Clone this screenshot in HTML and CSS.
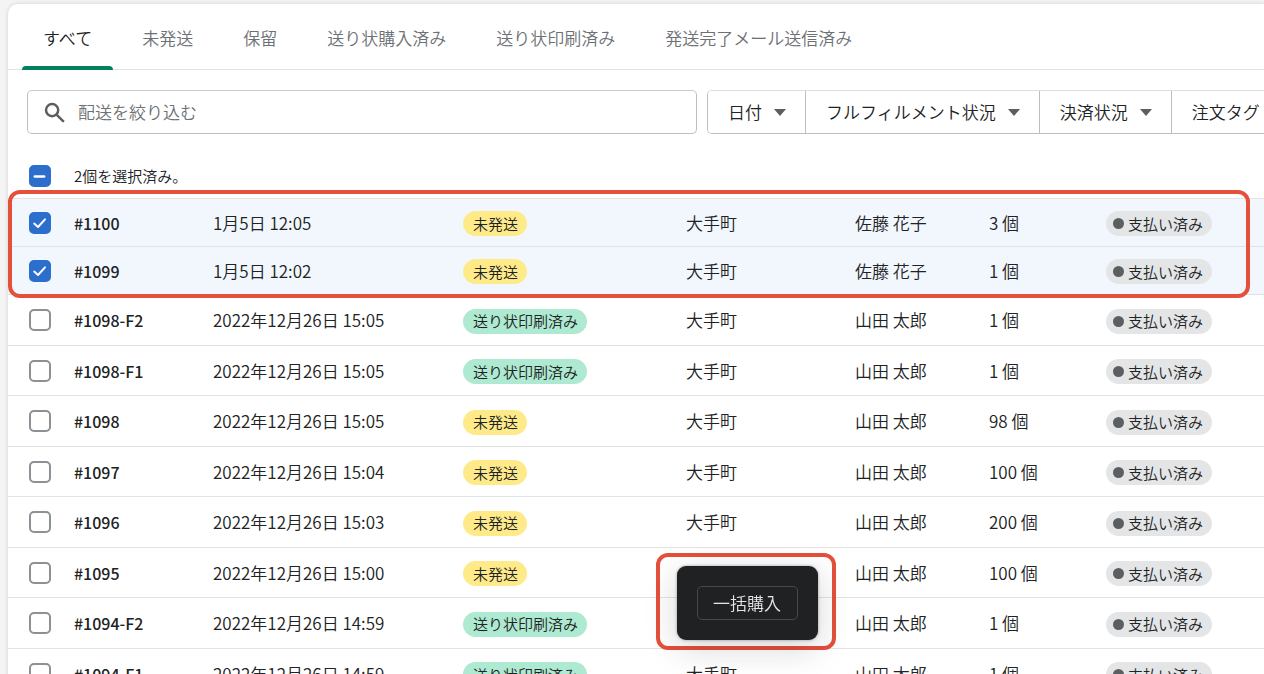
FILE: index.html
```html
<!DOCTYPE html>
<html lang="ja">
<head>
<meta charset="utf-8">
<title>配送</title>
<link rel="stylesheet" href="styles.css">
</head>
<body>
<svg class="sprite" aria-hidden="true">
  <symbol id="check" viewBox="0 0 22 22"><path d="M5.200 11.600 9 15l7-7.600" fill="none" stroke="#fff" stroke-width="2" stroke-linecap="round" stroke-linejoin="round"/></symbol>
  <symbol id="dash" viewBox="0 0 22 22"><path d="M5.800 11.500h9.400" fill="none" stroke="#fff" stroke-width="2.400" stroke-linecap="round"/></symbol>
</svg>
<main class="card">
  <nav class="tabs" role="tablist">
    <button class="tab tab-active" role="tab" aria-selected="true">すべて</button>
    <button class="tab" role="tab">未発送</button>
    <button class="tab" role="tab">保留</button>
    <button class="tab" role="tab">送り状購入済み</button>
    <button class="tab" role="tab">送り状印刷済み</button>
    <button class="tab" role="tab">発送完了メール送信済み</button>
  </nav>
  <div class="toolbar">
    <label class="search">
      <svg class="search-icon" viewBox="0 0 22 22" aria-hidden="true"><circle cx="8.500" cy="8.500" r="6.400"/><path d="M13.400 13.400 20 20"/></svg>
      <input type="text" aria-label="配送を絞り込む" placeholder="配送を絞り込む">
    </label>
    <div class="filters">
      <button class="filter">日付<span class="caret"></span></button>
      <button class="filter">フルフィルメント状況<span class="caret"></span></button>
      <button class="filter">決済状況<span class="caret"></span></button>
      <button class="filter">注文タグ<span class="caret"></span></button>
    </div>
  </div>
  <div class="bulk">
    <span class="box"><input type="checkbox" id="all" checked><svg><use href="#dash"/></svg></span>
    <label for="all">2個を選択済み。</label>
  </div>
  <div class="list">
    <table>
      <colgroup><col class="c-check"><col class="c-id"><col class="c-date"><col class="c-status"><col class="c-place"><col class="c-name"><col class="c-count"><col></colgroup>
      <tbody>
        <tr class="selected"><td><span class="box"><input type="checkbox" aria-label="#1100" checked><svg><use href="#check"/></svg></span></td><th scope="row">#1100</th><td>1月5日 12:05</td><td><span class="badge warn">未発送</span></td><td>大手町</td><td>佐藤 花子</td><td>3 個</td><td><span class="badge paid">支払い済み</span></td></tr>
        <tr class="selected"><td><span class="box"><input type="checkbox" aria-label="#1099" checked><svg><use href="#check"/></svg></span></td><th scope="row">#1099</th><td>1月5日 12:02</td><td><span class="badge warn">未発送</span></td><td>大手町</td><td>佐藤 花子</td><td>1 個</td><td><span class="badge paid">支払い済み</span></td></tr>
        <tr><td><span class="box"><input type="checkbox" aria-label="#1098-F2"></span></td><th scope="row">#1098-F2</th><td>2022年12月26日 15:05</td><td><span class="badge done">送り状印刷済み</span></td><td>大手町</td><td>山田 太郎</td><td>1 個</td><td><span class="badge paid">支払い済み</span></td></tr>
        <tr><td><span class="box"><input type="checkbox" aria-label="#1098-F1"></span></td><th scope="row">#1098-F1</th><td>2022年12月26日 15:05</td><td><span class="badge done">送り状印刷済み</span></td><td>大手町</td><td>山田 太郎</td><td>1 個</td><td><span class="badge paid">支払い済み</span></td></tr>
        <tr><td><span class="box"><input type="checkbox" aria-label="#1098"></span></td><th scope="row">#1098</th><td>2022年12月26日 15:05</td><td><span class="badge warn">未発送</span></td><td>大手町</td><td>山田 太郎</td><td>98 個</td><td><span class="badge paid">支払い済み</span></td></tr>
        <tr><td><span class="box"><input type="checkbox" aria-label="#1097"></span></td><th scope="row">#1097</th><td>2022年12月26日 15:04</td><td><span class="badge warn">未発送</span></td><td>大手町</td><td>山田 太郎</td><td>100 個</td><td><span class="badge paid">支払い済み</span></td></tr>
        <tr><td><span class="box"><input type="checkbox" aria-label="#1096"></span></td><th scope="row">#1096</th><td>2022年12月26日 15:03</td><td><span class="badge warn">未発送</span></td><td>大手町</td><td>山田 太郎</td><td>200 個</td><td><span class="badge paid">支払い済み</span></td></tr>
        <tr><td><span class="box"><input type="checkbox" aria-label="#1095"></span></td><th scope="row">#1095</th><td>2022年12月26日 15:00</td><td><span class="badge warn">未発送</span></td><td></td><td>山田 太郎</td><td>100 個</td><td><span class="badge paid">支払い済み</span></td></tr>
        <tr><td><span class="box"><input type="checkbox" aria-label="#1094-F2"></span></td><th scope="row">#1094-F2</th><td>2022年12月26日 14:59</td><td><span class="badge done">送り状印刷済み</span></td><td></td><td>山田 太郎</td><td>1 個</td><td><span class="badge paid">支払い済み</span></td></tr>
        <tr><td><span class="box"><input type="checkbox" aria-label="#1094-F1"></span></td><th scope="row">#1094-F1</th><td>2022年12月26日 14:59</td><td><span class="badge done">送り状印刷済み</span></td><td>大手町</td><td>山田 太郎</td><td>1 個</td><td><span class="badge paid">支払い済み</span></td></tr>
      </tbody>
    </table>
    <div class="highlight"></div>
  </div>
</main>
<div class="action-frame">
  <div class="action-bar"><button class="buy">一括購入</button></div>
</div>
</body>
</html>
```

FILE: styles.css
```css
* { box-sizing: border-box; }
html, body { height: 100%; overflow: hidden; }
body {
  margin: 0;
  padding: 4px 0 0 8px;
  background: #f4f4f5;
  color: #202223;
  font: 350 17px/24px "Noto Sans CJK JP", sans-serif;
}
button, input { font: inherit; color: inherit; }
.sprite { display: none; }

.card {
  background: #fff;
  border-top-left-radius: 10px;
  box-shadow: 0 0 4px rgba(23, 24, 24, .16);
}

.tabs {
  display: flex;
  gap: 8px;
  height: 66px;
  padding-left: 14px;
  border-bottom: 1px solid #e1e3e5;
}
.tab {
  position: relative;
  padding: 2px 21px 0;
  border: 0;
  background: none;
  color: #6d7175;
  white-space: nowrap;
}
.tab-active { color: #202223; }
.tab-active::after {
  content: "";
  position: absolute;
  left: 0;
  right: 0;
  bottom: -1px;
  height: 4px;
  border-radius: 4px 4px 0 0;
  background: #008060;
}

.toolbar {
  display: flex;
  gap: 10px;
  padding: 20px 0 0 19px;
}
.search {
  flex: 1;
  display: flex;
  align-items: center;
  gap: 13px;
  height: 44px;
  padding: 0 16px;
  border: 1px solid #babfc3;
  border-top-color: #c9cccf;
  border-radius: 5px;
}
.search-icon {
  width: 21px;
  height: 21px;
  fill: none;
  stroke: #5c5f62;
  stroke-width: 2.6;
  stroke-linecap: round;
}
.search input {
  flex: 1;
  min-width: 0;
  padding: 0;
  border: 0;
  outline: 0;
  background: none;
}
.search input::placeholder { color: #6d7175; opacity: 1; }
.filters {
  flex: 0 0 557px;
  display: flex;
  height: 44px;
  overflow: hidden;
  border: 1px solid #babfc3;
  border-top-color: #dcdee0;
  border-right: 0;
  border-radius: 5px 0 0 5px;
}
.filter {
  flex: none;
  display: flex;
  align-items: center;
  gap: 12px;
  padding: 0 19px 0 20px;
  border: 0;
  border-right: 1px solid #babfc3;
  background: #fff;
  white-space: nowrap;
}
.caret {
  border: 6px solid transparent;
  border-top: 7px solid #5c5f62;
  border-bottom: 0;
}

.bulk {
  display: flex;
  align-items: center;
  gap: 23px;
  height: 64px;
  padding: 20px 0 0 21px;
  font-size: 15px;
}
.box { position: relative; display: block; width: 22px; height: 22px; }
.box input {
  appearance: none;
  display: block;
  width: 22px;
  height: 22px;
  margin: 0;
  border: 2px solid #8c9196;
  border-radius: 5px;
  background: #fff;
}
.box input:checked { border-color: #2c6ecb; background: #2c6ecb; }
.box svg {
  position: absolute;
  inset: 0;
  width: 22px;
  height: 22px;
  pointer-events: none;
}

.list { position: relative; }
table { width: 100%; table-layout: fixed; border-collapse: separate; border-spacing: 0; }
.c-check { width: 58px; }
.c-id { width: 139px; }
.c-date { width: 250px; }
.c-status { width: 223px; }
.c-place { width: 169px; }
.c-name { width: 134px; }
.c-count { width: 117px; }
td, th {
  height: 50px;
  padding: 0 0 0 8px;
  border-top: 1px solid #e1e3e5;
  text-align: left;
  vertical-align: middle;
  white-space: nowrap;
}
td:first-child { padding-left: 21px; }
td:nth-child(4), td:last-child { padding-top: 2px; }
tr:nth-child(odd) > * { height: 51px; }
tr.selected > * { height: 48px; background: #f2f7fe; }
th { font-size: 16px; font-weight: 500; }
.badge {
  display: flex;
  align-items: center;
  width: fit-content;
  height: 25px;
  padding: 0 9px 0 10px;
  border-radius: 13px;
  font-size: 15px;
}
.warn { background: #ffea8a; }
.done { background: #aee9d1; }
.paid { gap: 4px; padding: 0 9px 0 7px; background: #e4e5e7; }
.paid::before {
  content: "";
  width: 11px;
  height: 11px;
  border-radius: 50%;
  background: #5c5f62;
}

.highlight {
  position: absolute;
  top: -8px;
  left: 0;
  right: 14px;
  height: 108px;
  border: 4px solid #e4503b;
  border-radius: 12px;
  pointer-events: none;
}
.action-frame {
  position: fixed;
  left: 656px;
  bottom: 24px;
  padding: 9px 14px 6px 17px;
  border: 4px solid #e4503b;
  border-radius: 12px;
}
.action-bar {
  padding: 20px;
  border-radius: 9px;
  background: #202123;
  box-shadow: 0 0 3px rgba(23, 24, 24, .4), 0 8px 32px rgba(23, 24, 24, .18);
}
.buy {
  display: block;
  height: 34px;
  padding: 0 16px 0 15px;
  border: 1px solid #47494c;
  border-radius: 5px;
  background: none;
  color: #e3e5e7;
}
```
